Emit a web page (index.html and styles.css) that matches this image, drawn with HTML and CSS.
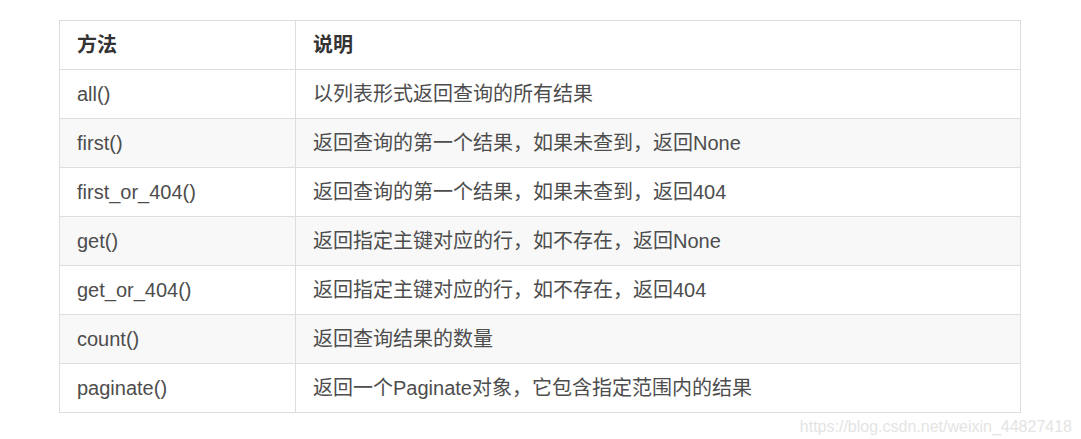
FILE: index.html
```html
<!DOCTYPE html>
<html lang="zh-CN">
<head>
<meta charset="utf-8">
<title>方法</title>
<link rel="stylesheet" href="styles.css">
</head>
<body>
<div class="page">
  <table class="methods">
    <thead>
      <tr><th class="c1">方法</th><th>说明</th></tr>
    </thead>
    <tbody>
      <tr><td>all()</td><td>以列表形式返回查询的所有结果</td></tr>
      <tr><td>first()</td><td>返回查询的第一个结果，如果未查到，返回None</td></tr>
      <tr><td>first_or_404()</td><td>返回查询的第一个结果，如果未查到，返回404</td></tr>
      <tr><td>get()</td><td>返回指定主键对应的行，如不存在，返回None</td></tr>
      <tr><td>get_or_404()</td><td>返回指定主键对应的行，如不存在，返回404</td></tr>
      <tr><td>count()</td><td>返回查询结果的数量</td></tr>
      <tr><td>paginate()</td><td>返回一个Paginate对象，它包含指定范围内的结果</td></tr>
    </tbody>
  </table>
  <div class="watermark">https://blog.csdn.net/weixin_44827418</div>
</div>
</body>
</html>
```

FILE: styles.css
```css
html, body {
  margin: 0;
  padding: 0;
  background: #ffffff;
}
.page {
  padding: 20px 0 0 59px;
  width: 1013px;
  font-family: "Liberation Sans", Arial, "Noto Sans CJK SC", sans-serif;
}
.methods {
  border-collapse: collapse;
  width: 962px;
  font-size: 20px;
  line-height: 30px;
  color: #4d4d4d;
}
.methods th,
.methods td {
  border: 1px solid #dddddd;
  padding: 9px 17px;
  text-align: left;
  vertical-align: middle;
  white-space: nowrap;
}
.methods td {
  font-weight: 400;
}
.methods th {
  font-weight: bold;
  color: #333333;
}
.methods .c1 {
  width: 201px;
}
.methods tbody tr:nth-child(even) {
  background: #f8f8f8;
}
.watermark {
  text-align: right;
  font-size: 16px;
  line-height: 18px;
  color: #e4e4e4;
  margin-top: 5px;
}
```
